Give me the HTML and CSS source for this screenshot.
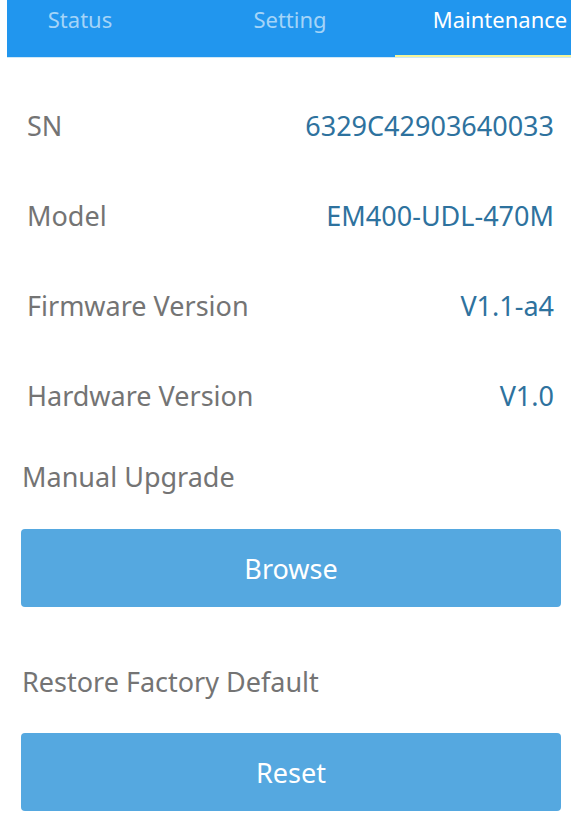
FILE: index.html
```html
<!DOCTYPE html>
<html>
<head>
<meta charset="utf-8">
<link rel="stylesheet" href="styles.css">
</head>
<body>
<div class="page">
  <nav class="tabs">
    <div class="tab-track">
      <div class="tab">Status</div>
      <div class="tab">Setting</div>
      <div class="tab active">Maintenance</div>
    </div>
  </nav>
  <div class="info">
    <div class="row"><span class="label">SN</span><span class="value">6329C42903640033</span></div>
    <div class="row"><span class="label">Model</span><span class="value">EM400-UDL-470M</span></div>
    <div class="row"><span class="label">Firmware Version</span><span class="value">V1.1-a4</span></div>
    <div class="row"><span class="label">Hardware Version</span><span class="value">V1.0</span></div>
  </div>
  <section class="action">
    <div class="title">Manual Upgrade</div>
    <button class="btn">Browse</button>
  </section>
  <section class="action">
    <div class="title">Restore Factory Default</div>
    <button class="btn">Reset</button>
  </section>
</div>
</body>
</html>
```
FILE: styles.css
```css
html, body {
  margin: 0;
  padding: 0;
  background: #ffffff;
}
body {
  font-family: "Noto Sans", "Open Sans", sans-serif;
  width: 571px;
  height: 817px;
  overflow: hidden;
}
.page {
  display: flex;
  flex-direction: column;
}
.tabs {
  margin-left: 7px;
  height: 57px;
  background: #2196ee;
  overflow: hidden;
  border-bottom: 1px solid #cfe8f7;
}
.tab-track {
  display: grid;
  grid-template-columns: 210px 210px 210px;
  margin-left: -32px;
  height: 100%;
}
.tab {
  color: rgba(255, 255, 255, 0.6);
  font-size: 22px;
  line-height: 22px;
  padding-top: 8px;
  text-align: center;
  white-space: nowrap;
}
.tab.active {
  color: #ffffff;
  border-bottom: 3px solid #f4f49a;
  margin-bottom: -1px;
}
.info {
  display: flex;
  flex-direction: column;
  padding: 0 17px 0 27px;
  margin-top: 22px;
}
.row {
  display: flex;
  justify-content: space-between;
  align-items: center;
  height: 90px;
  font-size: 27px;
}
.label {
  color: #747474;
}
.value {
  color: #2e729e;
}
.action {
  display: flex;
  flex-direction: column;
  padding: 0 10px 0 21px;
  margin-top: 22px;
}
.title {
  color: #747474;
  font-size: 27px;
  height: 30px;
  line-height: 30px;
  padding-left: 1px;
}
.btn {
  margin-top: 37px;
  height: 78px;
  border: none;
  border-radius: 4px;
  background: #55a8e0;
  color: #ffffff;
  font-family: "Noto Sans", "Open Sans", sans-serif;
  font-size: 27px;
  padding: 0;
}
.action + .action {
  margin-top: 60px;
}
.action + .action .btn {
  margin-top: 36px;
}
```
